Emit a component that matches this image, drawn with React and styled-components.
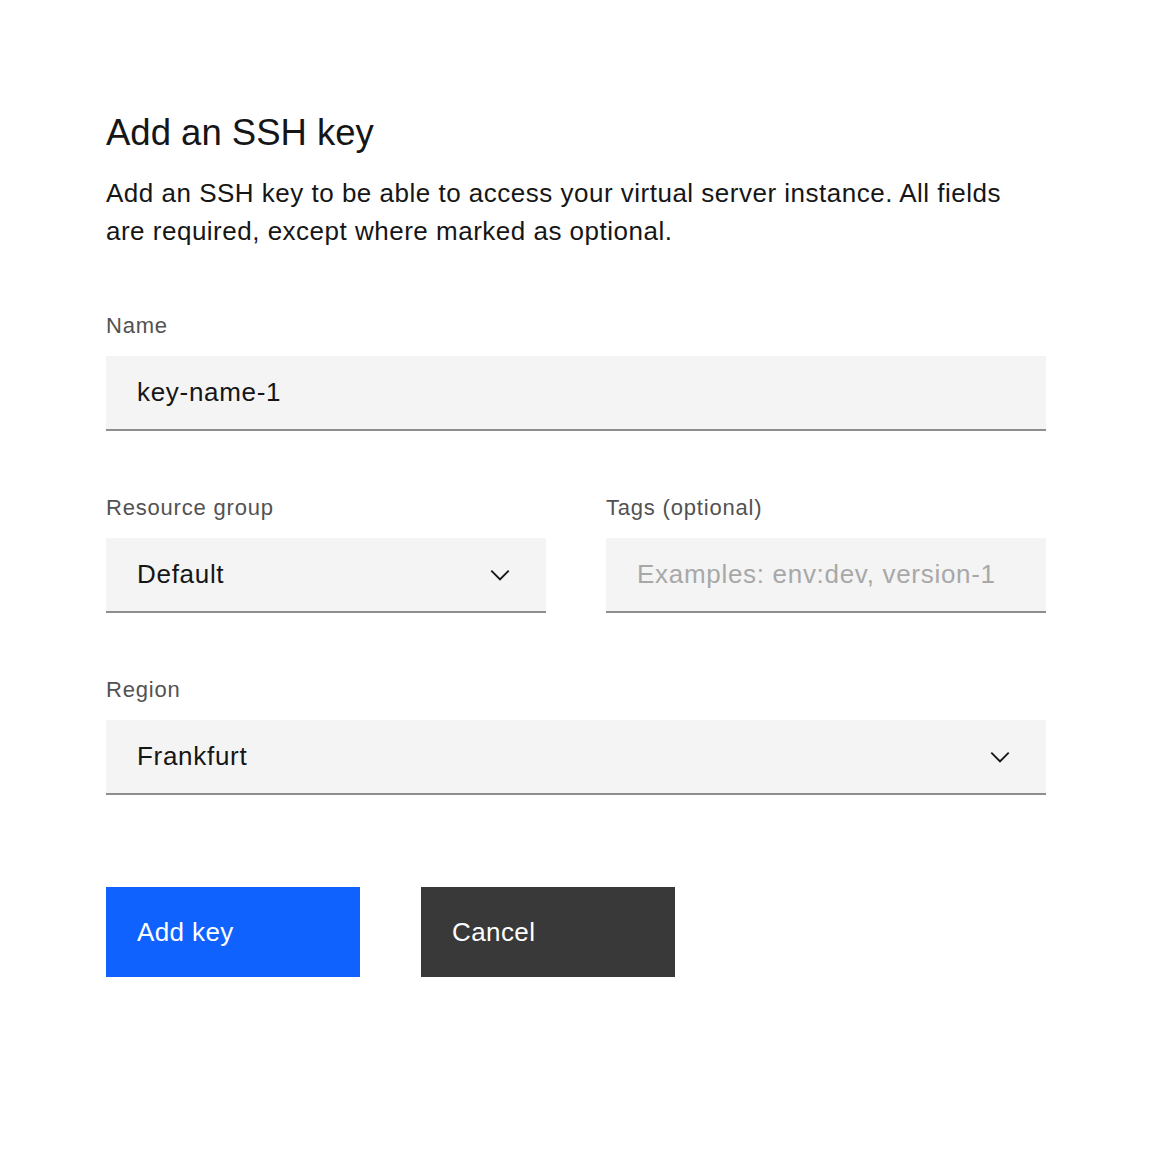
import React from "react";
import styled, { createGlobalStyle } from "styled-components";

const GlobalStyle = createGlobalStyle`
  * { box-sizing: border-box; }
  body {
    margin: 0;
    background: #ffffff;
    font-family: "Liberation Sans", Arial, sans-serif;
    color: #161616;
  }
`;

const Chevron = () => (
  <svg width="30" height="30" viewBox="0 0 16 16" fill="#161616">
    <path d="M8 11L3 6 3.7 5.3 8 9.6 12.3 5.3 13 6z" />
  </svg>
);

const App = () => {
  return (
    <>
      <GlobalStyle />
      <Page>
        <Title>Add an SSH key</Title>
        <Description>
          Add an SSH key to be able to access your virtual server instance. All fields
          are required, except where marked as optional.
        </Description>

        <Form>
          <Field>
            <Label>Name</Label>
            <TextInput defaultValue="key-name-1" />
          </Field>

          <FieldRow>
            <Field>
              <Label>Resource group</Label>
              <Select>
                <SelectValue>Default</SelectValue>
                <Chevron />
              </Select>
            </Field>
            <Field>
              <Label>Tags (optional)</Label>
              <TextInput placeholder="Examples: env:dev, version-1" />
            </Field>
          </FieldRow>

          <Field>
            <Label>Region</Label>
            <Select>
              <SelectValue>Frankfurt</SelectValue>
              <Chevron />
            </Select>
          </Field>
        </Form>

        <Actions>
          <Button kind="primary">Add key</Button>
          <Button kind="secondary">Cancel</Button>
        </Actions>
      </Page>
    </>
  );
};

const Page = styled.div`
  width: 1152px;
  min-height: 1152px;
  padding: 107px 106px 0 106px;
`;

const Title = styled.h1`
  margin: 0;
  font-size: 36.5px;
  font-weight: 400;
  line-height: 52px;
  color: #161616;
`;

const Description = styled.p`
  margin: 15px 0 0;
  width: 920px;
  font-size: 26px;
  line-height: 38px;
  letter-spacing: 0.5px;
  color: #161616;
`;

const Form = styled.div`
  margin-top: 61px;
  width: 940px;
  display: flex;
  flex-direction: column;
  gap: 62px;
`;

const FieldRow = styled.div`
  display: grid;
  grid-template-columns: 1fr 1fr;
  gap: 60px;
`;

const Field = styled.div`
  display: flex;
  flex-direction: column;
`;

const Label = styled.label`
  font-size: 22px;
  line-height: 30px;
  letter-spacing: 0.8px;
  color: #525252;
  margin-bottom: 15px;
`;

const TextInput = styled.input`
  height: 75px;
  width: 100%;
  border: none;
  border-bottom: 2px solid #8d8d8d;
  background: #f4f4f4;
  padding: 0 30px 0 31px;
  font-family: inherit;
  font-size: 26px;
  letter-spacing: 0.7px;
  color: #161616;
  outline: none;
  &::placeholder {
    color: #a8a8a8;
  }
`;

const Select = styled.div`
  height: 75px;
  display: flex;
  align-items: center;
  justify-content: space-between;
  background: #f4f4f4;
  border-bottom: 2px solid #8d8d8d;
  padding: 0 31px 0 31px;
`;

const SelectValue = styled.span`
  font-size: 26px;
  letter-spacing: 0.7px;
  color: #161616;
`;

const Actions = styled.div`
  margin-top: 92px;
  display: flex;
  gap: 61px;
`;

const Button = styled.button`
  width: 254px;
  height: 90px;
  border: none;
  padding: 0 31px;
  text-align: left;
  font-family: inherit;
  font-size: 26px;
  letter-spacing: 0.4px;
  color: #ffffff;
  background: ${(props) => (props.kind === "primary" ? "#0f62fe" : "#393939")};
  cursor: pointer;
`;

export default App;
